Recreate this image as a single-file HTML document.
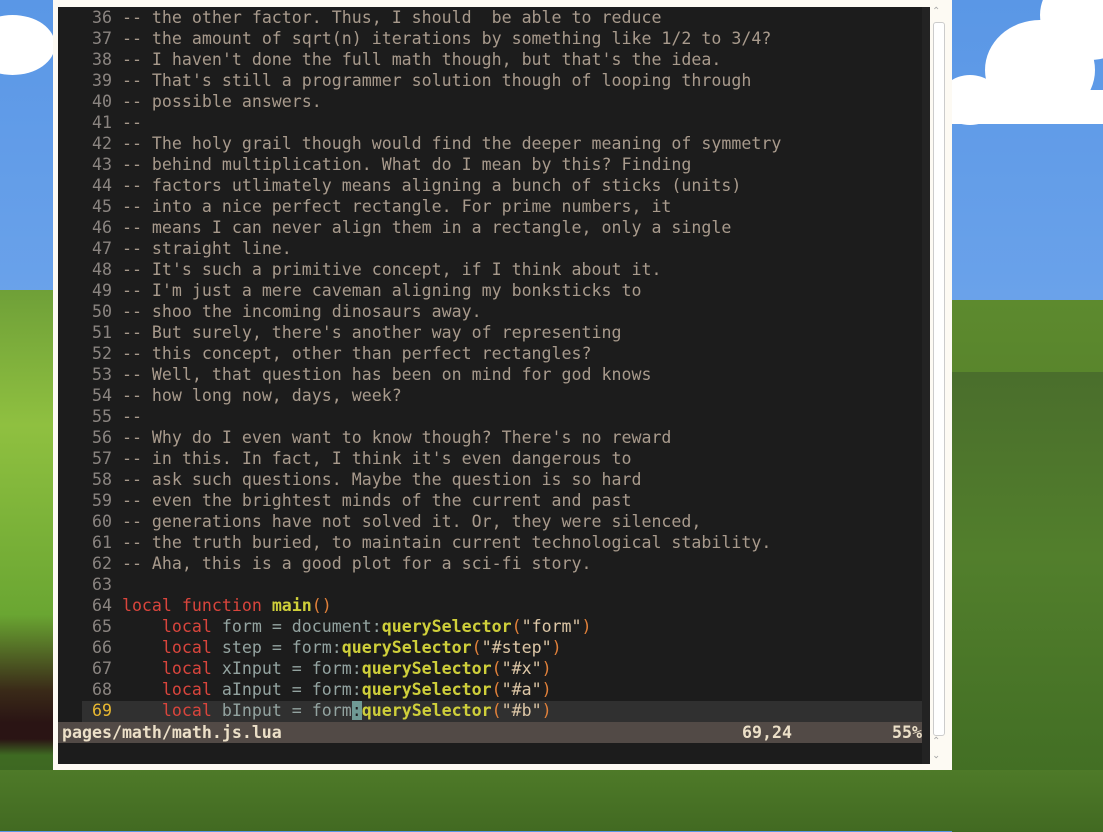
<!DOCTYPE html>
<html><head><meta charset="utf-8"><style>
*{margin:0;padding:0}
body{width:1103px;height:831px;overflow:hidden;position:relative;background:linear-gradient(180deg,#5a97e6 0,#6aa2ea 300px,#5d8a2e 300px,#4f7a28 560px,#3f6420 831px);font-family:"DejaVu Sans Mono","Liberation Mono",monospace}
.hill{position:absolute}
.c{position:absolute;background:#fff;border-radius:50%}
#win{position:absolute;left:53px;top:0;width:899px;height:770px;background:#fdfaf3}
#term{position:absolute;left:5px;top:7px;width:872px;height:757px;background:#1c1c1c;overflow:hidden}
.r{position:absolute;left:4px;height:21px;line-height:21px;font-size:16.6px;white-space:pre;color:#a89a8c}
.n{color:#8a8480}
.k{color:#d9453c}
.v{color:#93a3a0}
.f{color:#cfcf3a;font-weight:bold}
.s{color:#dcc6a6}
.p{color:#e0803a}
#sb{position:absolute;left:877px;top:0;width:17px;height:770px}
</style></head><body>
<div class="c" style="left:-30px;top:15px;width:85px;height:60px"></div>
<div class="hill" style="left:952px;top:90px;width:151px;height:34px;background:#fff"></div>
<div class="c" style="left:940px;top:75px;width:60px;height:50px"></div>
<div class="c" style="left:985px;top:20px;width:110px;height:100px"></div>
<div class="c" style="left:1040px;top:-30px;width:100px;height:90px"></div>
<div class="hill" style="left:952px;top:372px;width:151px;height:460px;background:linear-gradient(180deg,#4a6e2c,#527f2c 40%,#3e6a22)"></div>
<div class="hill" style="left:0;top:290px;width:53px;height:541px;background:linear-gradient(180deg,#6fa038,#8fc040 25%,#6aa632 60%,#3a2a18 74%,#2a1414 80%,#2a1414 83%,#3e6a22 86%,#3a6020)"></div>
<div class="hill" style="left:0;top:770px;width:1103px;height:61px;background:linear-gradient(180deg,#4e7a28,#426a22)"></div>
<div id="win">
<div id="term">
<div class="r" style="top:0"><span class="n">   36 </span>-- the other factor. Thus, I should  be able to reduce</div>
<div class="r" style="top:21px"><span class="n">   37 </span>-- the amount of sqrt(n) iterations by something like 1/2 to 3/4?</div>
<div class="r" style="top:42px"><span class="n">   38 </span>-- I haven't done the full math though, but that's the idea.</div>
<div class="r" style="top:63px"><span class="n">   39 </span>-- That's still a programmer solution though of looping through</div>
<div class="r" style="top:84px"><span class="n">   40 </span>-- possible answers.</div>
<div class="r" style="top:105px"><span class="n">   41 </span>--</div>
<div class="r" style="top:126px"><span class="n">   42 </span>-- The holy grail though would find the deeper meaning of symmetry</div>
<div class="r" style="top:147px"><span class="n">   43 </span>-- behind multiplication. What do I mean by this? Finding</div>
<div class="r" style="top:168px"><span class="n">   44 </span>-- factors utlimately means aligning a bunch of sticks (units)</div>
<div class="r" style="top:189px"><span class="n">   45 </span>-- into a nice perfect rectangle. For prime numbers, it</div>
<div class="r" style="top:210px"><span class="n">   46 </span>-- means I can never align them in a rectangle, only a single</div>
<div class="r" style="top:231px"><span class="n">   47 </span>-- straight line.</div>
<div class="r" style="top:252px"><span class="n">   48 </span>-- It's such a primitive concept, if I think about it.</div>
<div class="r" style="top:273px"><span class="n">   49 </span>-- I'm just a mere caveman aligning my bonksticks to</div>
<div class="r" style="top:294px"><span class="n">   50 </span>-- shoo the incoming dinosaurs away.</div>
<div class="r" style="top:315px"><span class="n">   51 </span>-- But surely, there's another way of representing</div>
<div class="r" style="top:336px"><span class="n">   52 </span>-- this concept, other than perfect rectangles?</div>
<div class="r" style="top:357px"><span class="n">   53 </span>-- Well, that question has been on mind for god knows</div>
<div class="r" style="top:378px"><span class="n">   54 </span>-- how long now, days, week?</div>
<div class="r" style="top:399px"><span class="n">   55 </span>--</div>
<div class="r" style="top:420px"><span class="n">   56 </span>-- Why do I even want to know though? There's no reward</div>
<div class="r" style="top:441px"><span class="n">   57 </span>-- in this. In fact, I think it's even dangerous to</div>
<div class="r" style="top:462px"><span class="n">   58 </span>-- ask such questions. Maybe the question is so hard</div>
<div class="r" style="top:483px"><span class="n">   59 </span>-- even the brightest minds of the current and past</div>
<div class="r" style="top:504px"><span class="n">   60 </span>-- generations have not solved it. Or, they were silenced,</div>
<div class="r" style="top:525px"><span class="n">   61 </span>-- the truth buried, to maintain current technological stability.</div>
<div class="r" style="top:546px"><span class="n">   62 </span>-- Aha, this is a good plot for a sci-fi story.</div>
<div class="r" style="top:567px"><span class="n">   63 </span></div>
<div class="r" style="top:588px"><span class="n">   64 </span><span class="k">local function </span><span class="f">main</span><span class="p">()</span></div>
<div class="r" style="top:609px"><span class="n">   65 </span>    <span class="k">local</span><span class="v"> form = document:</span><span class="f">querySelector</span><span class="p">(</span><span class="s">"form"</span><span class="p">)</span></div>
<div class="r" style="top:630px"><span class="n">   66 </span>    <span class="k">local</span><span class="v"> step = form:</span><span class="f">querySelector</span><span class="p">(</span><span class="s">"#step"</span><span class="p">)</span></div>
<div class="r" style="top:651px"><span class="n">   67 </span>    <span class="k">local</span><span class="v"> xInput = form:</span><span class="f">querySelector</span><span class="p">(</span><span class="s">"#x"</span><span class="p">)</span></div>
<div class="r" style="top:672px"><span class="n">   68 </span>    <span class="k">local</span><span class="v"> aInput = form:</span><span class="f">querySelector</span><span class="p">(</span><span class="s">"#a"</span><span class="p">)</span></div>
<div style="position:absolute;left:24px;top:694px;width:840px;height:21px;background:#303030"></div>
<div class="r" style="top:693px"><span style="color:#e8b830">   69 </span>    <span class="k">local</span><span class="v"> bInput = form</span><span style="background:#6f9a94;color:#1c1c1c">:</span><span class="f">querySelector</span><span class="p">(</span><span class="s">"#b"</span><span class="p">)</span></div>
<div style="position:absolute;left:0;top:715px;width:864px;height:21px;background:#524a46"></div>
<div class="r" style="top:715px;left:4px;color:#ece0c8;font-weight:bold">pages/math/math.js.lua</div>
<div class="r" style="top:715px;left:684px;color:#ece0c8;font-weight:bold">69,24</div>
<div class="r" style="top:715px;left:834px;color:#ece0c8;font-weight:bold">55%</div>
<div style="position:absolute;left:864px;top:0;width:8px;height:757px;background:#232323"></div>
</div>
<div id="sb">
<div style="position:absolute;left:2px;top:6px;font-size:10px;color:#aaa;font-family:'DejaVu Sans'">&#8963;</div>
<div style="position:absolute;left:3px;top:22px;width:10px;height:712px;border:1px solid #ccc;border-radius:3px;background:#fff"></div>
<div style="position:absolute;left:2px;top:736px;font-size:10px;color:#aaa;font-family:'DejaVu Sans'">&#8963;</div>
<div style="position:absolute;left:2px;top:748px;font-size:10px;color:#aaa;font-family:'DejaVu Sans';transform:scaleY(-1)">&#8963;</div>
</div>
</div>
</body></html>
